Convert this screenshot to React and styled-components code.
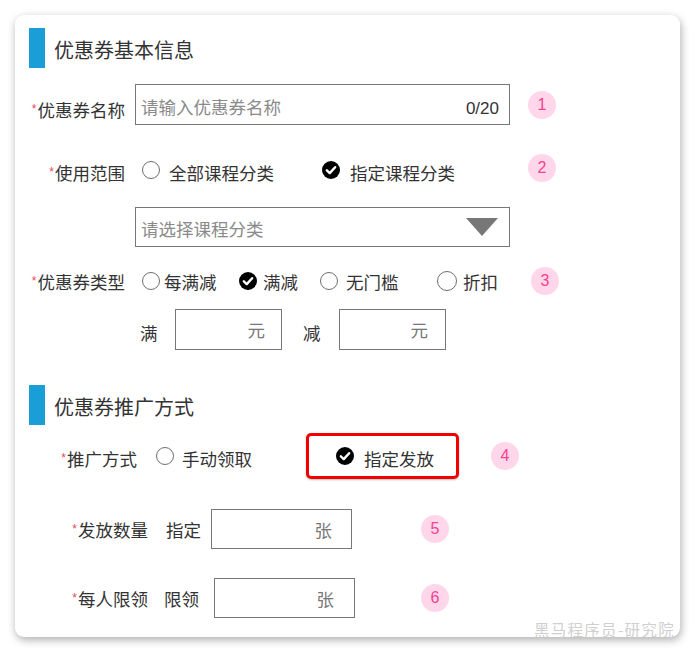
import React from 'react'
import styled, { createGlobalStyle } from 'styled-components'

const GlobalStyle = createGlobalStyle`
  body {
    margin: 0;
    background: #fff;
    font-family: "Noto Sans CJK SC", "Noto Sans", sans-serif;
    color: #333;
  }
`

const Card = styled.div`
  position: relative;
  box-sizing: border-box;
  width: 665px;
  height: 622px;
  margin: 15px;
  padding: 13px 14px 0;
  background: #fff;
  border-radius: 9px;
  box-shadow: 1px 3px 9px rgba(0, 0, 0, 0.32);
`

const SectionTitle = styled.div`
  display: flex;
  align-items: center;
  height: 40px;
  margin-top: ${p => p.$mt || 0}px;
  font-size: 20px;
  line-height: 1;
  color: #333;
`

const TitleText = styled.span`
  margin-top: 4px;
`

const Bar = styled.span`
  width: 16px;
  height: 40px;
  margin-right: 9px;
  background: #199ed8;
`

const Row = styled.div`
  display: flex;
  align-items: center;
  height: ${p => p.$h}px;
  margin-top: ${p => p.$mt}px;
  font-size: 17.5px;
  line-height: 1;
`

const Label = styled.div`
  flex-shrink: 0;
  width: ${p => p.$w}px;
  margin-top: ${p => (p.$dy || 0) * 2}px;
  text-align: right;
  white-space: nowrap;
  color: #333;
`

const Star = styled.span`
  font-family: "Liberation Sans", sans-serif;
  font-size: 12px;
  color: #e8475a;
  vertical-align: 4px;
  margin-right: 1px;
`

const TextBox = styled.div`
  box-sizing: border-box;
  display: flex;
  align-items: center;
  justify-content: space-between;
  flex-shrink: 0;
  width: ${p => p.$w}px;
  height: ${p => p.$h}px;
  margin-left: ${p => p.$ml}px;
  padding: 0 ${p => p.$pr || 10}px 0 5px;
  border: 1px solid #777;
  background: #fff;
`

const Placeholder = styled.span`
  margin-top: 4px;
  color: #8a8a8a;
`

const Counter = styled.span`
  font-family: "Liberation Sans", Arial, sans-serif;
  font-size: 17px;
  color: #333;
  margin-top: 8px;
`

const Unit = styled.span`
  margin-left: auto;
  margin-top: 2px;
  color: #777;
`

const Caret = styled.span`
  width: 0;
  height: 0;
  border-left: 16px solid transparent;
  border-right: 16px solid transparent;
  border-top: 18px solid #777;
`

const Option = styled.div`
  display: flex;
  align-items: center;
  flex-shrink: 0;
  gap: ${p => p.$gap}px;
  margin-left: ${p => p.$ml}px;
  white-space: nowrap;
  color: #333;
`

const OptText = styled.span`
  margin-top: ${p => (p.$dy || 0) * 2}px;
`

const RadioRing = styled.span`
  box-sizing: border-box;
  width: ${p => p.$size || 18}px;
  height: ${p => p.$size || 18}px;
  border: 1.3px solid #6f6f6f;
  border-radius: 50%;
  background: #fff;
`

const Word = styled.span`
  flex-shrink: 0;
  margin-left: ${p => p.$ml}px;
  margin-top: ${p => p.$mt || 0}px;
  white-space: nowrap;
  color: #333;
`

const Highlight = styled.div`
  box-sizing: border-box;
  display: flex;
  align-items: center;
  gap: 10px;
  width: 153px;
  height: 46px;
  margin-left: ${p => p.$ml}px;
  padding-left: 27px;
  border: 3px solid #f20000;
  border-radius: 5px;
  box-shadow: 0 1px 2px rgba(0, 0, 0, 0.25);
  color: #333;
`

const Badge = styled.span`
  display: flex;
  align-items: center;
  justify-content: center;
  flex-shrink: 0;
  width: 28px;
  height: 28px;
  margin-left: ${p => p.$ml}px;
  margin-top: ${p => p.$mt || 0}px;
  border-radius: 50%;
  background: #ffd6ea;
  color: #f7428c;
  font-family: "Liberation Sans", Arial, sans-serif;
  font-size: 16px;
`

const Watermark = styled.div`
  position: absolute;
  right: 5px;
  bottom: 0;
  font-size: 15.5px;
  letter-spacing: 1.3px;
  line-height: 1;
  color: #cfcfcf;
`

const CheckIcon = ({ size = 18 }) => (
  <svg width={size} height={size} viewBox="0 0 20 20">
    <circle cx="10" cy="10" r="10" fill="#000" />
    <path d="M5.4 10.4 L8.6 13.4 L14.6 6.9" fill="none" stroke="#fff" strokeWidth="2.7" strokeLinecap="round" strokeLinejoin="round" />
  </svg>
)

const Req = ({ children, w, dy }) => (
  <Label $w={w} $dy={dy}>
    <Star>*</Star>
    {children}
  </Label>
)

const App = () => {
  return (
    <>
      <GlobalStyle />
      <Card>
        <SectionTitle>
          <Bar />
          <TitleText>优惠券基本信息</TitleText>
        </SectionTitle>

        <Row $h={41} $mt={16}>
          <Req w={96} dy={5}>优惠券名称</Req>
          <TextBox $w={375} $h={41} $ml={10}>
            <Placeholder>请输入优惠券名称</Placeholder>
            <Counter>0/20</Counter>
          </TextBox>
          <Badge $ml={18}>1</Badge>
        </Row>

        <Row $h={30} $mt={30}>
          <Req w={96} dy={3}>使用范围</Req>
          <Option $gap={9} $ml={17}>
            <RadioRing />
            <OptText $dy={3}>全部课程分类</OptText>
          </Option>
          <Option $gap={10} $ml={48}>
            <CheckIcon />
            <OptText $dy={3}>指定课程分类</OptText>
          </Option>
          <Badge $ml={73} $mt={-4}>2</Badge>
        </Row>

        <Row $h={40} $mt={22}>
          <TextBox $w={375} $h={40} $ml={106} $pr={11}>
            <Placeholder>请选择课程分类</Placeholder>
            <Caret />
          </TextBox>
        </Row>

        <Row $h={30} $mt={19}>
          <Req w={96} dy={1}>优惠券类型</Req>
          <Option $gap={4} $ml={17}>
            <RadioRing />
            <OptText $dy={1}>每满减</OptText>
          </Option>
          <Option $gap={6} $ml={22.5}>
            <CheckIcon />
            <OptText $dy={1}>满减</OptText>
          </Option>
          <Option $gap={8} $ml={22}>
            <RadioRing />
            <OptText $dy={1}>无门槛</OptText>
          </Option>
          <Option $gap={6} $ml={38.5}>
            <RadioRing $size={20} />
            <OptText $dy={1}>折扣</OptText>
          </Option>
          <Badge $ml={33}>3</Badge>
        </Row>

        <Row $h={42} $mt={12}>
          <Word $ml={111} $mt={7}>满</Word>
          <TextBox $w={107} $h={41} $ml={17.5} $pr={16}>
            <Unit>元</Unit>
          </TextBox>
          <Word $ml={21} $mt={7}>减</Word>
          <TextBox $w={107} $h={41} $ml={18.5} $pr={17}>
            <Unit>元</Unit>
          </TextBox>
        </Row>

        <SectionTitle $mt={35}>
          <Bar />
          <TitleText>优惠券推广方式</TitleText>
        </SectionTitle>

        <Row $h={46} $mt={8}>
          <Req w={108} dy={3}>推广方式</Req>
          <Option $gap={8} $ml={19}>
            <RadioRing />
            <OptText $dy={3}>手动领取</OptText>
          </Option>
          <Highlight $ml={54}>
            <CheckIcon />
            <OptText $dy={3}>指定发放</OptText>
          </Highlight>
          <Badge $ml={32}>4</Badge>
        </Row>

        <Row $h={40} $mt={30}>
          <Req w={119} dy={1}>发放数量</Req>
          <Word $ml={18} $mt={2}>指定</Word>
          <TextBox $w={141} $h={40} $ml={10} $pr={19}>
            <Unit>张</Unit>
          </TextBox>
          <Badge $ml={69}>5</Badge>
        </Row>

        <Row $h={40} $mt={29}>
          <Req w={119} dy={1}>每人限领</Req>
          <Word $ml={16} $mt={2}>限领</Word>
          <TextBox $w={141} $h={40} $ml={15} $pr={20}>
            <Unit>张</Unit>
          </TextBox>
          <Badge $ml={66}>6</Badge>
        </Row>

        <Watermark>黑马程序员-研究院</Watermark>
      </Card>
    </>
  )
}

export default App
